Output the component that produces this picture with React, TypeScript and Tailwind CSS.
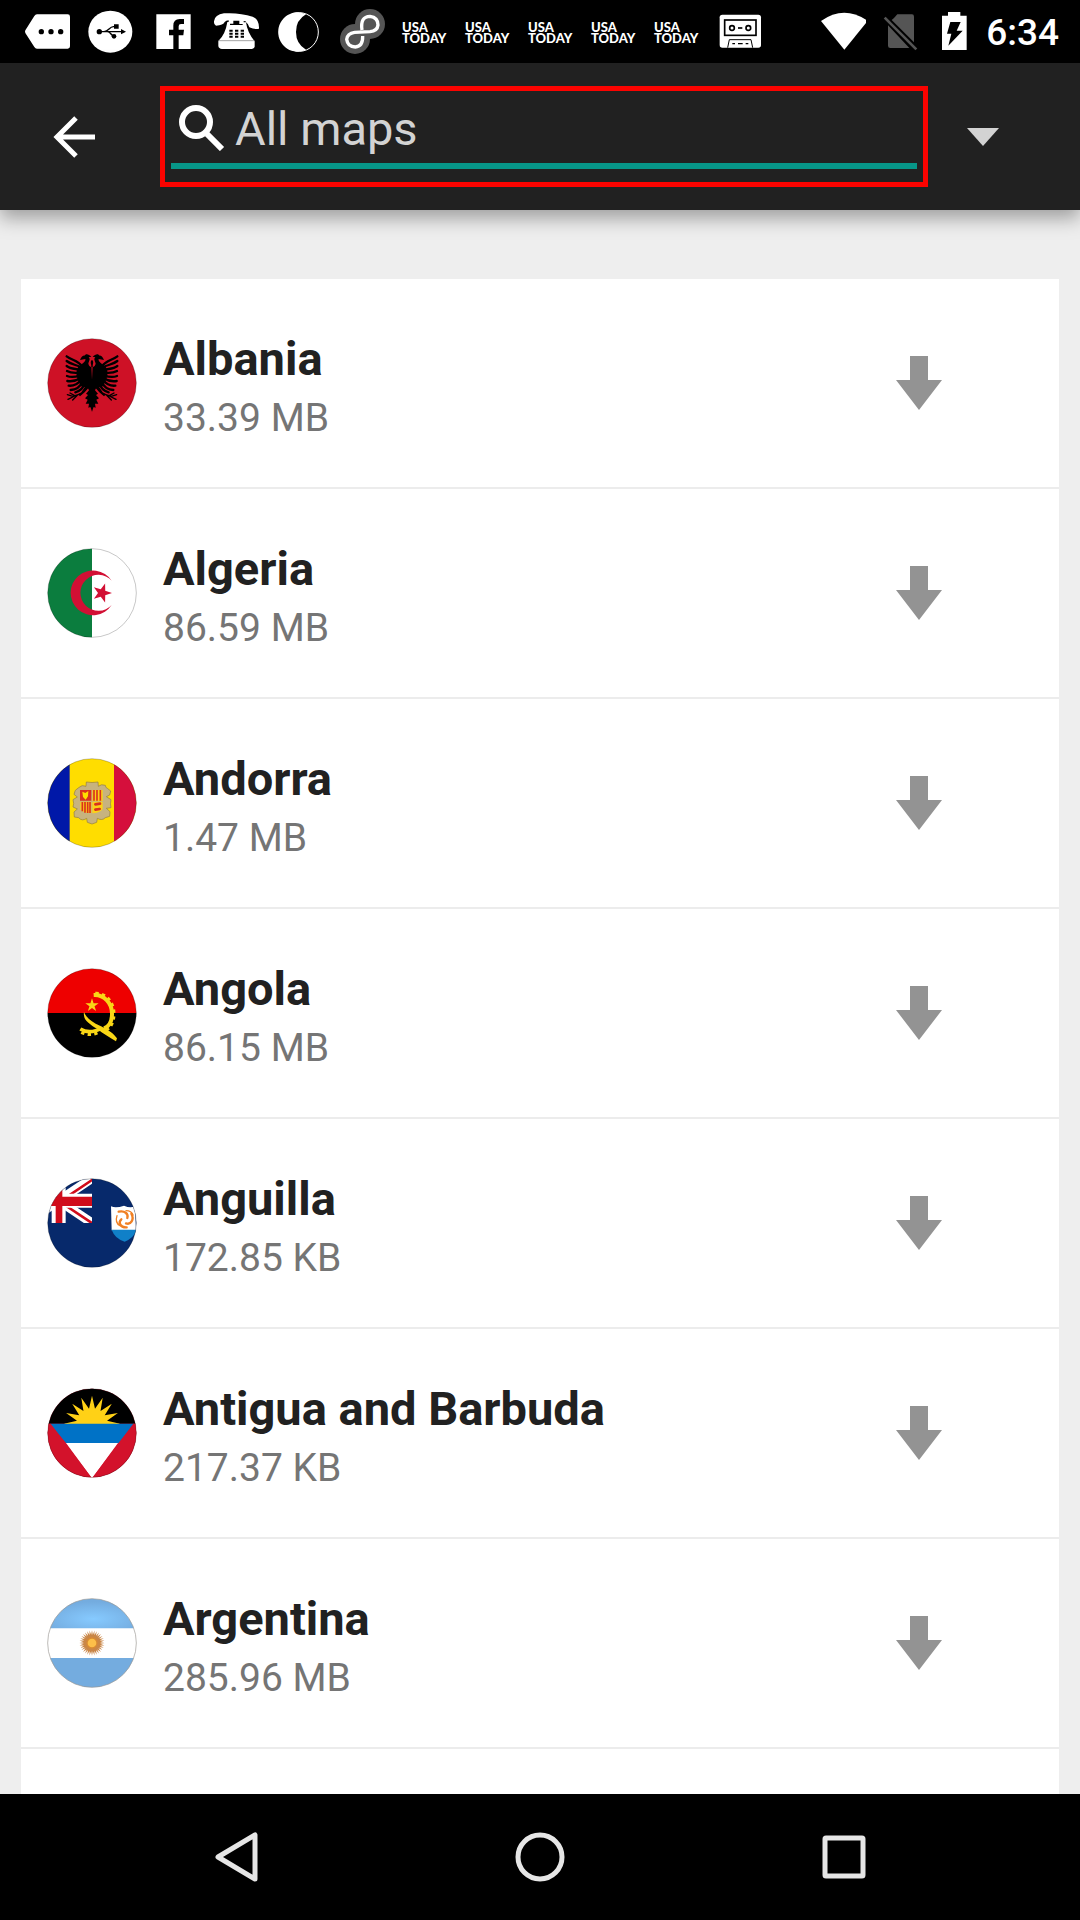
import type { ReactNode } from "react";

const polar = (cx: number, cy: number, r: number, deg: number) => {
  const a = (deg * Math.PI) / 180;
  return `${(cx + r * Math.cos(a)).toFixed(1)},${(cy + r * Math.sin(a)).toFixed(1)}`;
};

const star = (cx: number, cy: number, outer: number, inner: number, points: number, start: number) =>
  Array.from({ length: points * 2 }, (_, i) =>
    polar(cx, cy, i % 2 ? inner : outer, start + (i * 180) / points),
  ).join(" ");

function Flag({ id, top, children, ring }: { id: string; top: number; children: ReactNode; ring?: string }) {
  return (
    <svg viewBox={`81 ${top} 270 270`} className="size-[90px] shrink-0" aria-hidden="true">
      <clipPath id={id}>
        <circle cx="216" cy={top + 135} r="133" />
      </clipPath>
      <g clipPath={`url(#${id})`}>{children}</g>
      <circle cx="216" cy={top + 135} r="133" fill="none" stroke={ring ?? "#00000055"} strokeWidth="2" />
    </svg>
  );
}

function EagleHalf() {
  return (
    <g>
      <path d="M217 150 C212 150 211 158 214 164 L217 230 L186 230 C178 220 172 206 170 196 C168 180 172 170 182 164 C190 158 198 152 196 146 L180 149 C184 139 190 135 194 136 C196 129 206 130 214 139 L206 141 C212 146 207 152 205 160 C207 168 212 170 217 170Z" />
      <g fill="none" stroke="#000" strokeWidth="7" strokeLinecap="round">
        <path d="M186 168 C174 150 156 150 140 138" />
        <path d="M184 172 C170 162 154 164 140 152" />
        <path d="M184 180 C170 174 154 178 140 167" />
        <path d="M184 188 C170 186 156 191 141 182" />
        <path d="M184 194 C172 198 158 204 141 197" />
        <path d="M184 202 C174 208 162 216 142 212" />
        <path d="M184 208 C176 218 166 228 146 226" />
        <path d="M188 214 C182 226 174 238 152 239" />
        <path d="M194 220 C190 232 182 242 166 246" />
      </g>
      <path d="M200 222 L184 246 L174 252 L180 258 L194 246 L208 230Z" />
      <path
        d="M184 250 L158 258 L142 253 M164 257 L144 267 M172 255 L158 269 M164 256 L150 248"
        fill="none"
        stroke="#000"
        strokeWidth="4"
        strokeLinecap="round"
      />
      <path d="M217 222 L200 226 L207 240 L198 250 L204 254 L195 264 L203 268 L197 280 L207 280 L205 292 L211 290 L217 304Z" />
    </g>
  );
}

const albania = (
  <Flag id="flag-al" top={83}>
    <path fill="#ce1126" d="M80 80h280v280H80z" />
    <EagleHalf />
    <g transform="translate(432 0) scale(-1 1)">
      <EagleHalf />
    </g>
  </Flag>
);

const algeria = (
  <Flag id="flag-dz" top={713}>
    <path fill="#fff" d="M80 710h280v280H80z" />
    <path fill="#0b7d3e" d="M80 710h136v280H80z" />
    <path fill="#d21034" d="M275 811 A67 67 0 1 0 275 884 A54 54 0 1 1 275 811Z" />
    <polygon fill="#d21034" points={star(246, 848, 30, 12, 5, 0)} />
  </Flag>
);

const andorra = (
  <Flag id="flag-ad" top={83}>
    <path fill="#ffdd00" d="M80 80h280v280H80z" />
    <path fill="#0018a8" d="M80 80h69v280H80z" />
    <path fill="#d50f3c" d="M282 80h80v280h-80z" />
    <path
      fill="#c7b37f"
      stroke="#8f7c45"
      strokeWidth="2"
      d="M198 168 L199 155 Q216 158 234 155 L235 168 Q244 160 256 165 Q256 172 262 174 L272 182 L269 194 L259 199 L273 208 Q270 220 273 232 L259 234 L270 244 L269 258 L256 262 Q246 272 232 264 L230 276 L216 281 L202 276 L200 264 Q186 274 176 262 L163 260 L162 245 L172 236 L159 230 Q163 220 159 208 L172 200 L162 192 L166 180 L176 172 Q186 162 198 168Z"
    />
    <path fill="#d9321e" d="M180 179h34v32h-34z" />
    <path fill="#ffdd00" d="M187 184 L196 188 L205 182 L204 198 L197 208 L189 200Z" />
    <path fill="#fcd116" d="M217 179h31v33h-31zM181 214h33v34q-22 0-33-10zM217 214h31v22q-8 12-31 13z" />
    <path stroke="#d9321e" strokeWidth="5" d="M222 179v32M231 179v32M241 179v32M187 215v28M195 215v32M203 215v33M210 215v33" />
    <path stroke="#d9321e" strokeWidth="8" strokeLinecap="round" d="M226 222l14-2M226 238l13-2" />
  </Flag>
);

const angola = (
  <Flag id="flag-ao" top={713}>
    <path fill="#ee0000" d="M80 710h280v138H80z" />
    <path fill="#000" d="M80 848h280v140H80z" />
    <path fill="none" stroke="#f9d616" strokeWidth="12" d="M221 794 C252 792 276 818 276 850 C276 878 264 890 252 894" />
    <path fill="none" stroke="#f9d616" strokeWidth="9" strokeDasharray="10 10" d="M226 789 C258 787 282 816 282 850 C282 878 270 894 258 900" />
    <path fill="none" stroke="#f9d616" strokeWidth="11" d="M181 896 C200 908 222 906 246 893" />
    <path fill="none" stroke="#f9d616" strokeWidth="9" strokeDasharray="10 10" d="M184 906 C202 916 222 914 240 904" />
    <path fill="#f9d616" d="M192 845 C198 862 216 876 240 886 C264 897 282 910 291 924 L288 933 C270 922 250 910 232 896 C206 880 188 868 192 845Z" />
    <polygon fill="#f9d616" points={star(216, 825, 21, 8, 5, -90)} />
  </Flag>
);

const anguilla = (
  <Flag id="flag-ai" top={83}>
    <path fill="#07296b" d="M80 80h280v280H80z" />
    <clipPath id="canton">
      <path d="M16 84h200v134H16z" />
    </clipPath>
    <g clipPath="url(#canton)">
      <path stroke="#fff" strokeWidth="27" d="M16 218 L216 84 M16 84 L216 218" />
      <path stroke="#d00c1b" strokeWidth="8" d="M124 151 L222 85 M112 149 L220 221" />
      <path stroke="#fff" strokeWidth="42" d="M16 151h200M116 84v134" />
      <path stroke="#d00c1b" strokeWidth="28" d="M16 153h200" />
      <path stroke="#d00c1b" strokeWidth="20" d="M117 84v134" />
    </g>
    <path fill="#fff" d="M273 168 Q288 174 312 166 Q330 174 345 168 L348 240 H275Z" />
    <path fill="#1080c8" d="M275 238 H350 Q342 262 314 274 Q284 264 275 238Z" />
    <g fill="none" stroke="#f08024" strokeWidth="7" strokeLinecap="round">
      <path d="M296 184 C314 180 326 190 322 203" />
      <path d="M334 190 C344 208 332 224 318 219" />
      <path d="M320 231 C300 232 294 216 304 207" />
      <path d="M291 196 C286 212 292 222 300 226 M318 181 C328 181 336 185 339 194" strokeWidth="4" />
    </g>
  </Flag>
);

const antigua = (
  <Flag id="flag-ag" top={713}>
    <path fill="#d3122b" d="M80 710h280v280H80z" />
    <path fill="#000" d="M80 710h280v110H80z" />
    <polygon fill="#ffd116" points={star(216, 820, 84, 46, 16, -90)} />
    <path fill="#0072c6" d="M90 820h252L296 878H138z" />
    <path fill="#fff" d="M138 878h156L216 984z" />
    <path fill="#d3122b" d="M80 820h12L216 984v6H80zM352 820h-12L216 984v6h136z" />
  </Flag>
);

const argentina = (
  <Flag id="flag-ar" top={83} ring="#9c9894">
    <radialGradient id="sky" cx="50%" cy="70%" r="55%">
      <stop offset="0" stopColor="#86caff" />
      <stop offset="1" stopColor="#74acdf" />
    </radialGradient>
    <path fill="#fff" d="M80 80h280v280H80z" />
    <path fill="url(#sky)" d="M80 80h280v94H80z" />
    <path fill="#74acdf" d="M80 263h280v94H80z" />
    <polygon fill="#c98647" points={star(216, 218, 38, 25, 32, 0)} />
    <circle cx="216" cy="218" r="15" fill="#fcbf49" stroke="#d98b32" strokeWidth="4" />
  </Flag>
);

const maps: { name: string; size: string; flag: ReactNode }[] = [
  { name: "Albania", size: "33.39 MB", flag: albania },
  { name: "Algeria", size: "86.59 MB", flag: algeria },
  { name: "Andorra", size: "1.47 MB", flag: andorra },
  { name: "Angola", size: "86.15 MB", flag: angola },
  { name: "Anguilla", size: "172.85 KB", flag: anguilla },
  { name: "Antigua and Barbuda", size: "217.37 KB", flag: antigua },
  { name: "Argentina", size: "285.96 MB", flag: argentina },
];

function StatusIcon({ x, children }: { x: number; children: ReactNode }) {
  return (
    <svg viewBox={`${x} 0 144 192`} className="h-16 w-12 shrink-0" fill="#fff" aria-hidden="true">
      {children}
    </svg>
  );
}

function UsaToday() {
  return (
    <div className="w-12 shrink-0 pt-[2px] pl-px font-['Lato',sans-serif] text-[13px] leading-[11px] font-black">
      USA TODAY
    </div>
  );
}

function StatusBar() {
  return (
    <div className="flex h-[63px] shrink-0 items-center justify-between overflow-hidden bg-black pr-[21px] pl-[23px] text-white">
      <div className="flex items-center gap-[15px]">
        <StatusIcon x={69}>
          <path d="M111 43 H203 Q210 43 210 50 V139 Q210 146 203 146 H111 Q106 146 103 141 L76 99 Q74 95 76 91 L103 48 Q106 43 111 43Z" />
          <g fill="#000">
            <circle cx="124" cy="95" r="8" />
            <circle cx="153" cy="95" r="8" />
            <circle cx="182" cy="95" r="8" />
          </g>
        </StatusIcon>
        <StatusIcon x={258}>
          <ellipse cx="331" cy="95" rx="66" ry="63" />
          <circle cx="298" cy="95" r="8" fill="#000" />
          <path d="M298 95h66M312 95c14 0 16-15 28-15h8M322 95c12 0 10 14 22 14" fill="none" stroke="#000" strokeWidth="4" />
          <path d="M363 87l15 8-15 8zM342 73h14v13h-14z" fill="#000" />
          <circle cx="342" cy="109" r="7" fill="#000" />
        </StatusIcon>
        <StatusIcon x={447}>
          <path d="M469 43H572V147H536V106H550L552 89H536V79Q536 72 543 72H552V57H539Q520 57 520 77V89H507V106H520V147H469Z" />
        </StatusIcon>
        <StatusIcon x={636}>
          <path d="M642 64 Q644 44 672 40 Q718 37 758 50 Q778 58 777 86 Q764 90 748 82 Q746 72 738 67 L737 64 L731 63 V72 H718 V62 H700 V71 H686 V61 Q678 62 674 66 Q670 76 648 77 Q641 74 642 64Z" />
          <path d="M682 66 H690 V75 H728 V67 H738 Q742 98 764 124 V140 Q762 147 750 147 H666 Q656 146 655 138 V123 Q676 104 682 66Z" />
          <path d="M655 122H764" stroke="#777" strokeWidth="2" />
          <path d="M688 92h44M688 101h44M688 110h44" stroke="#000" strokeWidth="6" strokeDasharray="10 7" />
        </StatusIcon>
        <StatusIcon x={825}>
          <ellipse cx="898" cy="96" rx="57" ry="58" fill="#000" stroke="#fff" strokeWidth="3" />
          <path d="M918 43 A58 59 0 1 0 918 149 Q888 132 888 96 Q888 60 918 43Z" />
        </StatusIcon>
        <StatusIcon x={1014}>
          <circle cx="1110" cy="72" r="45" fill="#555" />
          <circle cx="1065" cy="117" r="45" fill="#555" />
          <path
            d="M1086 90 Q1080 50 1110 49 Q1134 52 1134 75 Q1132 93 1110 95 L1064 97 Q1042 100 1040 118 Q1043 141 1066 141 Q1089 139 1088 108"
            fill="none"
            stroke="#fff"
            strokeWidth="10"
          />
        </StatusIcon>
        <UsaToday />
        <UsaToday />
        <UsaToday />
        <UsaToday />
        <UsaToday />
        <StatusIcon x={1008}>
          <rect x="1019" y="44" width="124" height="99" rx="8" />
          <rect x="1034" y="60" width="94" height="46" fill="none" stroke="#000" strokeWidth="5" />
          <g fill="none" stroke="#000" strokeWidth="5">
            <circle cx="1056" cy="84" r="7" />
            <circle cx="1105" cy="84" r="7" />
            <path d="M1074 84h13" />
            <path d="M1043 143 L1048 119 H1113 L1118 143" strokeWidth="3" />
            <path d="M1057 131h8M1074 131h14M1097 131h8" strokeWidth="4" />
          </g>
        </StatusIcon>
      </div>
      <div className="flex items-center gap-2">
        <StatusIcon x={117}>
          <path d="M126 63 Q196 14 266 63 L196 149Z" />
        </StatusIcon>
        <StatusIcon x={285}>
          <path d="M345 54 L355 43 H399 Q405 43 405 50 V127 L338 60ZM327 76 L391 144 H334 Q327 144 327 137Z" fill="#555" />
          <path d="M317 53 L412 148" stroke="#555" strokeWidth="8" />
        </StatusIcon>
        <StatusIcon x={453}>
          <path d="M507 36H544V47H563V150H489V47H507Z" />
          <path d="M514 66H545L533 92H551L508 137L517 101H504Z" fill="#000" />
        </StatusIcon>
        <time className="pt-[3px] text-[37px] leading-[44px] font-medium">6:34</time>
      </div>
    </div>
  );
}

export default function App() {
  return (
    <div className="flex h-screen flex-col bg-[#eeeeee] font-['Roboto',sans-serif]">
      <StatusBar />

      <header className="relative z-10 flex h-[147px] shrink-0 items-center bg-[#212121] shadow-[0_8px_18px_rgba(0,0,0,0.34)]">
        <button aria-label="Back" className="flex h-full w-40 items-center justify-center pr-[12px]">
          <svg viewBox="0 0 42 42" className="size-[42px]" fill="none" stroke="#fff" strokeWidth="5">
            <path d="M23 2 L4 21 L23 40 M3 21 H42" />
          </svg>
        </button>
        <div className="flex h-[101px] min-w-0 flex-1 flex-col border-[5px] border-[#fb0300] px-[6px] pt-[7px]">
          <label className="flex h-[71px] items-center border-b-[6px] border-[#079688] pb-1">
            <svg viewBox="0 0 46 46" className="mr-[10px] mb-[2px] ml-[8px] size-[46px] shrink-0" fill="none" stroke="#fff">
              <circle cx="17" cy="17" r="14" strokeWidth="6" />
              <path d="M28 29 L43 44" strokeWidth="6" />
            </svg>
            <input
              type="text"
              aria-label="Search maps"
              placeholder="All maps"
              className="h-14 min-w-0 flex-1 bg-transparent text-[47px] leading-[56px] text-white outline-none placeholder:text-[#d3d3d3] placeholder:opacity-100"
            />
          </label>
        </div>
        <button aria-label="More options" className="flex h-full w-[152px] items-center pl-[39px]">
          <svg viewBox="0 0 32 18" className="h-[18px] w-8" fill="#d3d3d3">
            <path d="M0 0H32L16 18Z" />
          </svg>
        </button>
      </header>

      <main className="flex min-h-0 flex-1 flex-col overflow-hidden px-[21px] pt-[69px]">
        <ul className="flex-1 bg-white">
          {maps.map((map) => (
            <li key={map.name} className="flex h-[210px] items-center border-b-2 border-[#ececec] pr-[116px] pl-[26px]">
              {map.flag}
              <div className="ml-[26px] min-w-0 flex-1 pt-[6px]">
                <h2 className="text-[47px] leading-[56px] font-bold text-[#212121]">{map.name}</h2>
                <p className="mt-2 text-[39px] leading-[46px] text-[#757575]">{map.size}</p>
              </div>
              <button aria-label={`Download ${map.name}`}>
                <svg viewBox="0 0 48 54" className="h-[54px] w-12" fill="#939393">
                  <path d="M15 0H33V24H47L24 54L1 24H15Z" />
                </svg>
              </button>
            </li>
          ))}
        </ul>
      </main>

      <nav className="grid h-[126px] shrink-0 grid-cols-3 bg-black px-[84px]">
        <button aria-label="Back" className="flex items-center justify-center">
          <svg viewBox="0 0 50 50" className="size-[50px]" fill="none" stroke="#e6e6e6" strokeWidth="5" strokeLinejoin="round">
            <path d="M7 25 L44 3 V47Z" />
          </svg>
        </button>
        <button aria-label="Home" className="flex items-center justify-center">
          <svg viewBox="0 0 50 50" className="size-[50px]" fill="none" stroke="#e6e6e6" strokeWidth="5">
            <circle cx="25" cy="25" r="22" />
          </svg>
        </button>
        <button aria-label="Recent apps" className="flex items-center justify-center">
          <svg viewBox="0 0 50 50" className="size-[50px]" fill="none" stroke="#e6e6e6" strokeWidth="5">
            <rect x="6" y="6" width="38" height="38" rx="1" />
          </svg>
        </button>
      </nav>
    </div>
  );
}
